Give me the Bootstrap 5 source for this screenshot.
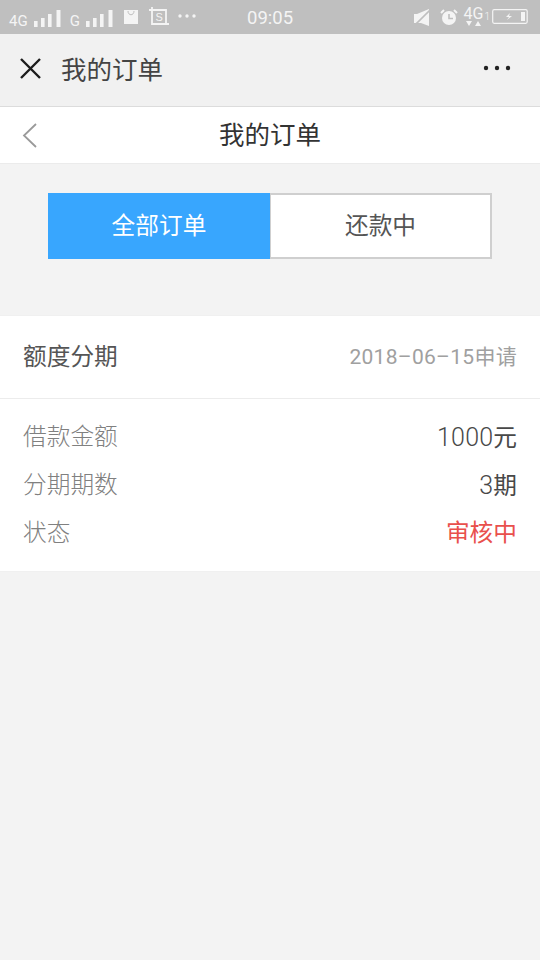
<!DOCTYPE html>
<html lang="zh">
<head>
<meta charset="utf-8">
<title>我的订单</title>
<link href="https://cdn.jsdelivr.net/npm/bootstrap@5.3.0/dist/css/bootstrap.min.css" rel="stylesheet">
<style>
html,body{height:100%}
body{background:#f3f3f3;font-family:"Noto Sans CJK SC","Liberation Sans",sans-serif;font-weight:300;width:540px;overflow:hidden}
.sbar{height:34px;background:#bfbfbf;color:#f4f4f4;padding:0 12px 0 9px;font-family:"Roboto","Liberation Sans",sans-serif}
.sbar svg{display:block;flex:none}
.sg{font-size:15px;line-height:1;font-weight:400}
.sg4{font-size:16px;line-height:14px}
.snet{width:20px;height:20px;margin-left:5px}
.stime{font-size:18.5px;line-height:1;position:absolute;left:247px;top:9px;font-weight:400}
.sblock{margin-top:8px}
.scol{margin-top:2px}
.wxbar{height:73px;background:#f1f1f1;border-bottom:1px solid #dcdcdc;padding:0 29px 4px 19px}
.wxtitle{font-size:25.5px;color:#444;margin-left:19px;line-height:1;font-weight:400}
.hbar{height:57px;background:#fff;border-bottom:1px solid #ebebeb;position:relative;padding-bottom:5px}
.htitle{font-size:25.5px;color:#333;font-weight:400;line-height:1}
.hback{position:absolute;left:22px;top:16px}
.tabwrap{padding:29px 48px 56px}
.tabon,.taboff{height:66px;font-size:23.7px;width:222px;flex:none;font-weight:400;padding-bottom:2px}
.tabon{background:#38a6fe;color:#fff}
.taboff{background:#fff;color:#555;border:2px solid #cfcfcf;border-left:1px solid #cfcfcf}
.ocard{background:#fff;border-top:1px solid #f0f0f0;border-bottom:1px solid #f0f0f0;height:257px}
.ohead{height:83px;padding:0 23px 3px;margin:0;border-bottom:1px solid #ececec}
.ohname{font-size:23.7px;color:#555;font-weight:400}
.ohdate{font-size:21px;color:#a0a0a0;font-family:"Roboto","Noto Sans CJK SC",sans-serif;font-weight:400;letter-spacing:.3px;padding-top:4px}
.olist{padding:13px 23px 0}
.orow{height:48px;font-size:23.7px;color:#808080}
.oval{color:#484848;font-family:"Roboto","Noto Sans CJK SC",sans-serif;font-weight:400;padding-top:3px}
.onum{font-size:25px;letter-spacing:.2px;font-weight:300}
.ored{color:#e9504c}
</style>
</head>
<body>
<div class="sbar d-flex align-items-center position-relative">
  <span class="sg sblock me-1">4G</span>
  <svg width="28" height="19" class="scol" style="margin-left:2px" fill="#f4f4f4"><rect x="0" y="12" width="3.6" height="6"/><rect x="7" y="9" width="3.6" height="9"/><rect x="14" y="5" width="3.6" height="13"/><rect x="22.5" y="1" width="4" height="17"/></svg>
  <span class="sg sblock ms-2 me-1">G</span>
  <svg width="28" height="19" class="scol" style="margin-left:2px" fill="#f4f4f4"><rect x="0" y="12" width="3.6" height="6"/><rect x="7" y="9" width="3.6" height="9"/><rect x="14" y="5" width="3.6" height="13"/><rect x="22.5" y="1" width="4" height="17"/></svg>
  <svg width="14" height="15" style="margin:1px 0 0 10px"><rect width="14" height="14" y="0" fill="#f4f4f4"/><path d="M4 1c0 5 6 5 6 0" fill="none" stroke="#bfbfbf" stroke-width="1"/></svg>
  <svg width="20" height="20" style="margin:0 0 1px 11px"><path d="M0 3h17v14M3 0v17h17" fill="none" stroke="#f4f4f4" stroke-width="1.8"/><text x="6.5" y="14" font-size="11" fill="#f4f4f4" font-family="Liberation Sans">S</text></svg>
  <svg width="18" height="4" style="margin:0 0 2px 9px" fill="#f4f4f4"><circle cx="2" cy="2" r="1.7"/><circle cx="9" cy="2" r="1.7"/><circle cx="16" cy="2" r="1.7"/></svg>
  <span class="stime">09:05</span>
  <div class="ms-auto d-flex align-items-center">
    <svg width="16" height="17"><path d="M0 5h3l12-5v17l-8-3H0z" fill="#f4f4f4"/><path d="M0 17L16 1" stroke="#bfbfbf" stroke-width="1.6"/></svg>
    <svg width="18" height="18" style="margin-left:10px"><circle cx="9" cy="10" r="7" fill="#f4f4f4"/><path d="M9 6v4.5h4" fill="none" stroke="#bfbfbf" stroke-width="1.6"/><path d="M1 5l3-3M17 5l-3-3" stroke="#f4f4f4" stroke-width="2"/></svg>
    <div class="snet"><span class="sg sg4 d-block">4G</span><svg width="16" height="6" style="margin:0 0 0 2px" fill="#f4f4f4"><path d="M1 0h6L4 5zM10 5h6l-3-5z"/></svg></div>
    <span style="font-size:10px;line-height:1;margin-left:1px">1</span>
    <svg width="36" height="15" style="margin:0 0 2px 2px"><rect x=".7" y=".7" width="34.5" height="13.6" rx="1.5" fill="none" stroke="#f4f4f4" stroke-width="1.2"/><rect x="29" y="3" width="4" height="9" fill="#f4f4f4"/><path d="M18 4l-4 4h3l-2 3 5-4h-3z" fill="#f4f4f4"/></svg>
  </div>
</div>
<div class="wxbar d-flex align-items-center">
  <svg width="23" height="23" class="flex-none"><path d="M2 2l19 19M21 2L2 21" stroke="#1c1c1c" stroke-width="2.4" fill="none"/></svg>
  <span class="wxtitle">我的订单</span>
  <svg width="28" height="6" class="ms-auto" fill="#222"><circle cx="3" cy="3" r="2.2"/><circle cx="14" cy="3" r="2.2"/><circle cx="25" cy="3" r="2.2"/></svg>
</div>
<div class="hbar d-flex align-items-center justify-content-center">
  <svg class="hback" width="16" height="25"><path d="M14 1L2 12.5 14 24" stroke="#9a9a9a" stroke-width="1.8" fill="none"/></svg>
  <span class="htitle">我的订单</span>
</div>
<div class="tabwrap d-flex">
  <div class="tabon d-flex align-items-center justify-content-center">全部订单</div>
  <div class="taboff d-flex align-items-center justify-content-center">还款中</div>
</div>
<div class="ocard">
  <div class="ohead d-flex align-items-center justify-content-between">
    <span class="ohname">额度分期</span>
    <span class="ohdate">2018–06–15申请</span>
  </div>
  <div class="olist">
    <div class="orow d-flex align-items-center justify-content-between"><span>借款金额</span><span class="oval"><span class="onum">1000</span>元</span></div>
    <div class="orow d-flex align-items-center justify-content-between"><span>分期期数</span><span class="oval"><span class="onum">3</span>期</span></div>
    <div class="orow d-flex align-items-center justify-content-between"><span>状态</span><span class="oval ored">审核中</span></div>
  </div>
</div>
<script src="https://cdn.jsdelivr.net/npm/bootstrap@5.3.0/dist/js/bootstrap.bundle.min.js"></script>
</body>
</html>
